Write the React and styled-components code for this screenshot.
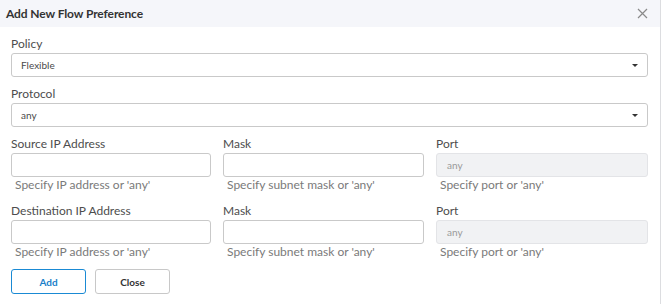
import React from "react";
import styled, { createGlobalStyle } from "styled-components";

const Global = createGlobalStyle`
  html, body { margin: 0; padding: 0; background: #fff; }
  body { font-family: Lato, "Open Sans", Arial, sans-serif; }
  * { box-sizing: border-box; }
`;

const Modal = styled.div`
  width: 661px;
  height: 304px;
  border-right: 1px solid #dcdde0;
  background: #fff;
`;

const Header = styled.div`
  height: 27px;
  background: #f5f6fa;
  display: flex;
  align-items: center;
  justify-content: space-between;
  padding: 0 12px 0 6px;
`;

const Title = styled.h4`
  margin: 0;
  font-size: 12px;
  font-weight: 700;
  color: #333;
  letter-spacing: -0.1px;
`;

const CloseIcon = styled.button`
  border: 0;
  background: none;
  padding: 0;
  width: 12px;
  height: 12px;
  display: flex;
  align-items: center;
  justify-content: center;
  cursor: pointer;
`;

const Body = styled.div`
  padding: 9px 12px 0 11px;
  display: flex;
  flex-direction: column;
`;

const Group = styled.div`
  display: flex;
  flex-direction: column;
  margin-bottom: ${(p) => p.$mb ?? 9}px;
`;

const Label = styled.label`
  font-size: 12px;
  line-height: 16px;
  color: #4d4d4d;
  margin-bottom: 1px;
`;

const SelectBox = styled.div`
  height: 24px;
  border: 1px solid #c9c9c9;
  border-radius: 3px;
  display: flex;
  align-items: center;
  justify-content: space-between;
  padding: 0 9px 0 9px;
  font-size: 10px;
  color: #4a4a4a;
  background: #fff;
`;

const Caret = styled.span`
  width: 0;
  height: 0;
  border-left: 3px solid transparent;
  border-right: 3px solid transparent;
  border-top: 3px solid #333;
`;

const Row = styled.div`
  display: grid;
  grid-template-columns: 200px 201px 1fr;
  column-gap: 12px;
  margin-bottom: ${(p) => p.$mb ?? 10}px;
`;

const Input = styled.div`
  height: 24px;
  border: 1px solid #c9c9c9;
  border-radius: 3px;
  background: ${(p) => (p.$disabled ? "#f1f2f4" : "#fff")};
  border-color: ${(p) => (p.$disabled ? "#e3e4e7" : "#c9c9c9")};
  display: flex;
  align-items: center;
  padding: 0 10px;
  font-size: 10px;
  color: #9a9a9a;
`;

const Help = styled.div`
  font-size: 12px;
  line-height: 16px;
  color: #7a7a7a;
  padding-left: 4px;
`;

const Buttons = styled.div`
  display: flex;
  gap: 9px;
`;

const Button = styled.button`
  width: 75px;
  height: 25px;
  border-radius: 3px;
  background: #fff;
  border: 1px solid ${(p) => (p.$primary ? "#1a8ad4" : "#c8c8c8")};
  color: ${(p) => (p.$primary ? "#1a7fc9" : "#333")};
  font-family: inherit;
  font-size: 10px;
  font-weight: 700;
  padding: 0;
`;

const Field = ({ label, value, disabled, help }) => (
  <div>
    <Group $mb={0}>
      <Label>{label}</Label>
      <Input $disabled={disabled}>{value}</Input>
    </Group>
    <Help>{help}</Help>
  </div>
);

export default function App() {
  return (
    <>
      <Global />
      <Modal>
        <Header>
          <Title>Add New Flow Preference</Title>
          <CloseIcon aria-label="Close">
            <svg width="11" height="11" viewBox="0 0 11 11">
              <path d="M1 1L10 10M10 1L1 10" stroke="#8a8a8a" strokeWidth="1.2" />
            </svg>
          </CloseIcon>
        </Header>
        <Body>
          <Group>
            <Label>Policy</Label>
            <SelectBox>
              <span>Flexible</span>
              <Caret />
            </SelectBox>
          </Group>
          <Group>
            <Label>Protocol</Label>
            <SelectBox>
              <span>any</span>
              <Caret />
            </SelectBox>
          </Group>
          <Row>
            <Field label="Source IP Address" help="Specify IP address or 'any'" />
            <Field label="Mask" help="Specify subnet mask or 'any'" />
            <Field label="Port" value="any" disabled help="Specify port or 'any'" />
          </Row>
          <Row $mb={9}>
            <Field label="Destination IP Address" help="Specify IP address or 'any'" />
            <Field label="Mask" help="Specify subnet mask or 'any'" />
            <Field label="Port" value="any" disabled help="Specify port or 'any'" />
          </Row>
          <Buttons>
            <Button $primary>Add</Button>
            <Button>Close</Button>
          </Buttons>
        </Body>
      </Modal>
    </>
  );
}
